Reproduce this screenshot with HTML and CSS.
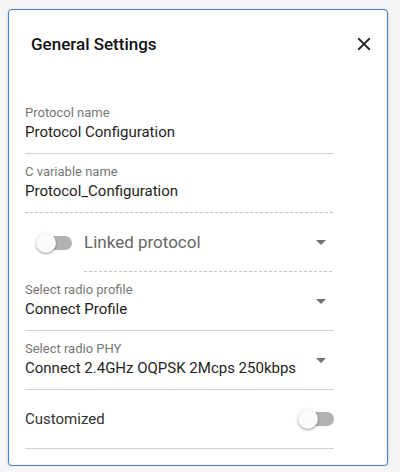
FILE: index.html
```html
<!DOCTYPE html>
<html lang="en">
<head>
    <meta charset="UTF-8">
    <meta name="viewport" content="width=device-width, initial-scale=1.0">
    <title>General Settings</title>
    <link rel="stylesheet" href="styles.css">
</head>
<body>
    <div class="card">
        <div class="card-header">
            <h2 class="title">General Settings</h2>
            <button class="close" aria-label="Close">
                <svg viewBox="0 0 24 24" width="22" height="22">
                    <path d="M19 6.41L17.59 5 12 10.59 6.41 5 5 6.41 10.59 12 5 17.59 6.41 19 12 13.41 17.59 19 19 17.59 13.41 12z"/>
                </svg>
            </button>
        </div>

        <div class="card-body">
            <div class="field">
                <div class="field-text">
                    <span class="field-label">Protocol name</span>
                    <span class="field-value">Protocol Configuration</span>
                </div>
            </div>

            <div class="field dashed">
                <div class="field-text">
                    <span class="field-label">C variable name</span>
                    <span class="field-value">Protocol_Configuration</span>
                </div>
            </div>

            <div class="field linked">
                <label class="switch">
                    <span class="track"></span>
                    <span class="thumb"></span>
                </label>
                <div class="linked-select dashed">
                    <span class="linked-text">Linked protocol</span>
                    <span class="arrow"></span>
                </div>
            </div>

            <div class="field">
                <div class="field-text">
                    <span class="field-label">Select radio profile</span>
                    <span class="field-value">Connect Profile</span>
                </div>
                <span class="arrow"></span>
            </div>

            <div class="field">
                <div class="field-text">
                    <span class="field-label">Select radio PHY</span>
                    <span class="field-value">Connect 2.4GHz OQPSK 2Mcps 250kbps</span>
                </div>
                <span class="arrow"></span>
            </div>

            <div class="field">
                <span class="toggle-text">Customized</span>
                <label class="switch">
                    <span class="track"></span>
                    <span class="thumb"></span>
                </label>
            </div>
        </div>
    </div>
</body>
</html>
```

FILE: styles.css
```css
body {
    margin: 0;
    padding: 9px 0 0 8px;
    font-family: Roboto, 'Liberation Sans', sans-serif;
    background-color: #f5f5f5;
}

.card {
    box-sizing: border-box;
    width: 380px;
    height: 457px;
    background-color: #fff;
    border: 1px solid #3d7fd9;
    border-radius: 4px;
    box-shadow: 0px 1px 3px rgba(0, 0, 0, 0.2);
}

.card-header {
    display: flex;
    align-items: center;
    justify-content: space-between;
    height: 68px;
    padding: 0 12px 0 22px;
}

.title {
    margin: 0;
    font-size: 17px;
    font-weight: 500;
    color: #111;
}

.close {
    display: flex;
    padding: 0;
    border: none;
    background: none;
    cursor: pointer;
}

.close svg {
    fill: #222;
}

.card-body {
    width: 309px;
    padding: 17px 0 0 16px;
}

.field {
    box-sizing: border-box;
    display: flex;
    align-items: center;
    height: 59px;
    border-bottom: 1px solid #d2d2d2;
}

.dashed {
    border-bottom: 1px solid transparent;
    background-image: repeating-linear-gradient(to right, #c2c2c2 0, #c2c2c2 3px, transparent 3px, transparent 5px);
    background-size: 100% 1px;
    background-repeat: no-repeat;
    background-origin: border-box;
    background-position: left bottom;
}

.field-text {
    display: flex;
    flex-direction: column;
    flex: 1;
    padding-bottom: 1px;
}

.field-label {
    font-size: 13px;
    line-height: 16px;
    margin-bottom: 1px;
    color: #777;
}

.field-value {
    font-size: 15px;
    line-height: 20px;
    color: #1e1e1e;
}

.arrow {
    width: 0;
    height: 0;
    margin-right: 8px;
    border-left: 5px solid transparent;
    border-right: 5px solid transparent;
    border-top: 5px solid #707070;
}

/* Linked protocol row: switch plus a disabled select */
.field.linked {
    border-bottom: none;
    align-items: stretch;
}

.field.linked .switch {
    align-self: center;
    margin: 0 12px 0 11px;
}

.linked-select {
    flex: 1;
    display: flex;
    align-items: center;
}

.linked-text {
    flex: 1;
    font-size: 17px;
    color: #666;
}

.toggle-text {
    flex: 1;
    font-size: 15px;
    color: #333;
}

/* Switch */
.switch {
    position: relative;
    display: block;
    width: 36px;
    height: 20px;
    cursor: pointer;
}

.track {
    position: absolute;
    top: 3px;
    left: 3px;
    right: 0;
    height: 14px;
    border-radius: 7px;
    background-color: #b2b2b2;
}

.thumb {
    position: absolute;
    top: 0;
    left: 0;
    width: 20px;
    height: 20px;
    border-radius: 50%;
    background-color: #fafafa;
    box-shadow: 0px 1px 3px rgba(0, 0, 0, 0.3), 0px 1px 1px rgba(0, 0, 0, 0.14);
}
```
